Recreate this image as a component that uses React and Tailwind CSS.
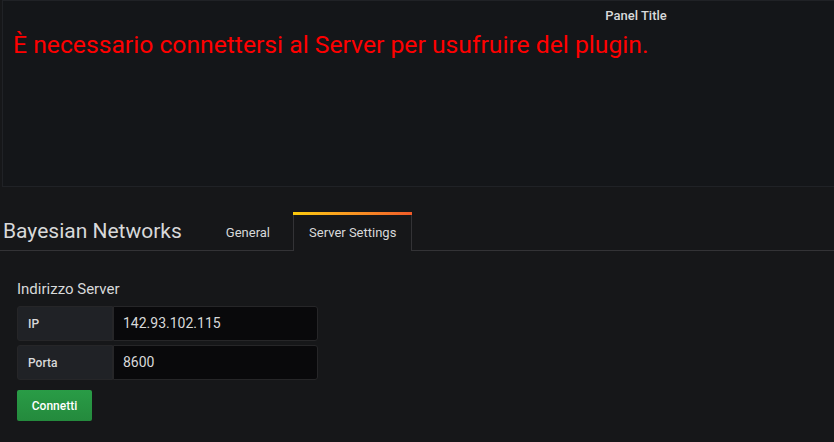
export default function App() {
  const font = { fontFamily: 'Roboto, "Liberation Sans", sans-serif' };
  return (
    <div className="w-[834px] h-[442px] overflow-hidden bg-[#161719] text-[#d8d9da]" style={font}>
      <div className="pl-[2px]">
        <div className="w-[1268px] h-[187px] border border-[#202226] bg-[#141619] flex flex-col">
          <div className="h-[30px] flex items-center justify-center text-[13px] font-medium text-[#d8d9da]">
            Panel Title
          </div>
          <div className="pl-[10px] text-[24.7px] leading-[28px] text-[#ff0000]">
            È necessario connettersi al Server per usufruire del plugin.
          </div>
        </div>
      </div>
      <div className="mt-[25px] flex items-end border-b border-[#333336] h-[39px] pl-[3px]">
        <div className="text-[21px] leading-[38px] text-[#d8d9da] mr-[28px]">Bayesian Networks</div>
        <div className="h-[38px] px-[16px] pt-[3px] flex items-center text-[13px] text-[#d8d9da] mr-[7px]">General</div>
        <div className="relative h-[39px] -mb-px px-[15px] flex items-center text-[13px] text-[#d8d9da] bg-[#161719] border-x border-[#333336]">
          <div className="absolute top-0 -left-px -right-px h-[3px] bg-gradient-to-r from-[#fbca0a] to-[#f05a28]" />
          <span className="pt-[2px]">Server Settings</span>
        </div>
      </div>
      <div className="pl-[17px] pt-[28px] flex flex-col">
        <div className="text-[15px] leading-[20px] text-[#d8d9da] mb-[7px]">Indirizzo Server</div>
        <div className="flex flex-col gap-[4px]">
          <div className="flex h-[35px] w-[301px]">
            <div className="w-[96px] bg-[#202226] rounded-l-[3px] border border-[#262628] flex items-center pl-[10px] text-[12px] font-medium text-[#d8d9da]">IP</div>
            <div className="flex-1 bg-[#09090b] border border-[#262628] rounded-r-[3px] flex items-center pl-[9px] text-[14px] text-[#d8d9da]">142.93.102.115</div>
          </div>
          <div className="flex h-[35px] w-[301px]">
            <div className="w-[96px] bg-[#202226] rounded-l-[3px] border border-[#262628] flex items-center pl-[10px] text-[12px] font-medium text-[#d8d9da]">Porta</div>
            <div className="flex-1 bg-[#09090b] border border-[#262628] rounded-r-[3px] flex items-center pl-[9px] text-[14px] text-[#d8d9da]">8600</div>
          </div>
        </div>
        <div className="mt-[10px]">
          <button className="w-[75px] h-[31px] rounded-[2px] bg-gradient-to-b from-[#299c46] to-[#248a3d] text-white text-[12px] font-medium">
            Connetti
          </button>
        </div>
      </div>
    </div>
  );
}
